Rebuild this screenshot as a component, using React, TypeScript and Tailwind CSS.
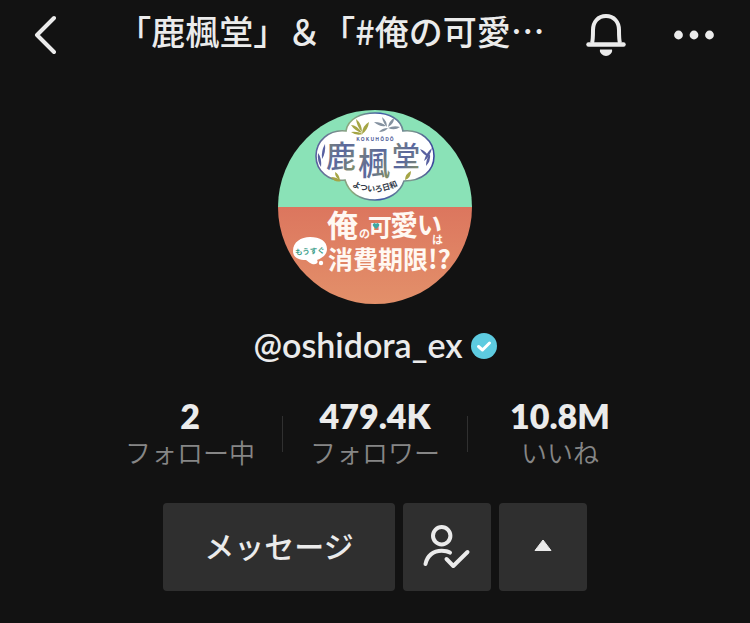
import type { ReactNode } from 'react';

const stats = [
  { value: '2', label: 'フォロー中' },
  { value: '479.4K', label: 'フォロワー' },
  { value: '10.8M', label: 'いいね' },
];

export default function App() {
  return (
    <div
      lang="ja"
      className="min-h-screen bg-[#121212] font-['Noto_Sans_CJK_JP',sans-serif] text-[#ebebeb]"
    >
      <Header />
      <main className="flex flex-col items-center px-4 pt-10 pb-8">
        <Avatar />
        <div className="mt-5 flex items-center gap-2">
          <h2 className="pb-0.5 font-['Lato','Noto_Sans_CJK_JP',sans-serif] text-[34px] leading-[42px] font-semibold">
            @oshidora_ex
          </h2>
          <VerifiedBadge />
        </div>
        <Stats />
        <div className="mt-[33px] flex gap-2">
          <ActionButton className="w-[232px]">メッセージ</ActionButton>
          <ActionButton className="w-[88px]" label="フォロー中">
            <UserCheckIcon />
          </ActionButton>
          <ActionButton className="w-[88px]" label="おすすめを表示">
            <svg width="18" height="12" viewBox="0 0 18 12" fill="currentColor">
              <path d="M9 1 L17 11.5 H1 Z" stroke="currentColor" strokeLinejoin="round" />
            </svg>
          </ActionButton>
        </div>
      </main>
    </div>
  );
}

function Header() {
  return (
    <header className="flex h-[70px] items-center pr-9 pl-8">
      <button type="button" aria-label="戻る" className="shrink-0">
        <svg width="24" height="40" viewBox="0 0 24 40" fill="none" stroke="currentColor">
          <path d="M22 3 L5 20 L22 37" strokeWidth="4" strokeLinecap="round" strokeLinejoin="round" />
        </svg>
      </button>
      <h1 className="min-w-0 flex-1 overflow-hidden pr-7 pb-2 pl-12 text-center text-[34px] leading-12 font-medium whitespace-nowrap">
        「鹿楓堂」＆「#俺の可愛…
      </h1>
      <div className="flex shrink-0 items-center gap-12">
        <button type="button" aria-label="通知">
          <svg width="40" height="42" viewBox="0 0 40 42" fill="none" stroke="currentColor">
            <path d="M6 29 C7 26 7 23 7 16 C7 8 12 2 20 2 C28 2 33 8 33 16 C33 23 33 26 34 29" strokeWidth="4" />
            <path d="M2.5 30.5 H37.5" strokeWidth="4.5" strokeLinecap="round" />
            <path d="M14 35.5 H26 C27 39 23 42 20 42 C17 42 13 39 14 35.5 Z" fill="currentColor" stroke="none" />
          </svg>
        </button>
        <button type="button" aria-label="その他">
          <svg width="40" height="10" viewBox="0 0 40 10" fill="currentColor">
            <circle cx="4.5" cy="5" r="4.4" />
            <circle cx="20" cy="5" r="4.4" />
            <circle cx="35.5" cy="5" r="4.4" />
          </svg>
        </button>
      </div>
    </header>
  );
}

function Stats() {
  return (
    <dl className="mt-[30px] flex items-center">
      {stats.map((s, i) => (
        <div key={s.label} className="flex items-center">
          {i > 0 && <div className="h-9 w-px bg-[#303030]" />}
          <div className="flex w-[184px] flex-col-reverse items-center">
            <dt className="text-[26px] leading-9 font-[350] text-[#868686]">{s.label}</dt>
            <dd className="font-['Lato','Noto_Sans_CJK_JP',sans-serif] text-[34px] leading-9 font-extrabold">
              {s.value}
            </dd>
          </div>
        </div>
      ))}
    </dl>
  );
}

function ActionButton({
  className,
  label,
  children,
}: {
  className: string;
  label?: string;
  children: ReactNode;
}) {
  return (
    <button
      type="button"
      aria-label={label}
      className={`flex h-[88px] items-center justify-center rounded bg-[#2f2f2f] pb-1 text-[30px] font-medium ${className}`}
    >
      {children}
    </button>
  );
}

function UserCheckIcon() {
  return (
    <svg
      width="48"
      height="44"
      viewBox="0 -2 48 44"
      fill="none"
      stroke="currentColor"
      strokeWidth="4"
      strokeLinecap="round"
      strokeLinejoin="round"
      overflow="visible"
    >
      <circle cx="18.7" cy="10.7" r="8.7" />
      <path d="M2.5 39 C4 31 10 25.7 18.7 25.7 C22 25.7 25 26.3 27 27.7" />
      <path d="M23.5 34 L30.3 41 L44.5 27" />
    </svg>
  );
}

function VerifiedBadge() {
  return (
    <svg width="26" height="26" viewBox="0 0 26 26" role="img" aria-label="認証済み">
      <circle cx="13" cy="13" r="13" fill="#5dcbe0" />
      <path d="M7.5 13.5 L11.5 17 L18.5 10" fill="none" stroke="#fff" strokeWidth="3" strokeLinecap="round" strokeLinejoin="round" />
    </svg>
  );
}

function Avatar() {
  return (
    <svg
      viewBox="0 0 194 194"
      className="size-[194px] rounded-full"
      fontFamily="'Noto Sans CJK JP', sans-serif"
    >
      <defs>
        <linearGradient id="coral" x1="0" y1="0" x2="0" y2="1">
          <stop offset="0" stopColor="#dc765e" />
          <stop offset="1" stopColor="#e3906a" />
        </linearGradient>
        <linearGradient id="ink" x1="0" y1="0" x2="1" y2="1">
          <stop offset="0" stopColor="#8a9068" />
          <stop offset="0.5" stopColor="#5866a0" />
          <stop offset="1" stopColor="#8d9a58" />
        </linearGradient>
        <linearGradient id="rim" x1="0" y1="0" x2="1" y2="0">
          <stop offset="0" stopColor="#5a5fa0" />
          <stop offset="0.3" stopColor="#8fae7c" />
          <stop offset="0.55" stopColor="#3f57a8" />
          <stop offset="0.8" stopColor="#7f9c8c" />
          <stop offset="1" stopColor="#3a469e" />
        </linearGradient>
        <path id="ribbon" d="M74 76 Q97 88 121 75" />
      </defs>
      <rect width="194" height="97" fill="#8ae2b7" />
      <rect y="97" width="194" height="97" fill="url(#coral)" />

      {/* Cloud crest */}
      <path
        d="M68 21 C70 8 84 3 97 3 C111 3 123 9 125 21 C143 19 156 31 156 46 C156 61 144 71 126 71 C122 83 110 90 97 90 C82 90 71 83 67 70 C51 72 38 61 38 46 C38 31 51 19 68 21 Z"
        fill="#fff"
        stroke="url(#rim)"
        strokeWidth="1.6"
      />
      {/* Bamboo leaves */}
      <g fill="#a5a545">
        <path d="M73 15 Q79 15 84 23 Q77 21 73 15 Z" />
        <path d="M78 9 Q84 14 84 22 Q79 17 78 9 Z" />
        <path d="M73 22 Q79 21 85 24 Q78 26 73 22 Z" />
        <path d="M84 24 Q84 16 91 12 Q90 20 84 24 Z" />
        <path d="M57 62 Q61 64 62 70 Q57 68 57 62 Z" />
        <path d="M53 67 Q59 67 63 71 Q57 73 53 67 Z" />
        <path d="M127 70 Q127 64 133 61 Q133 68 127 70 Z" />
      </g>
      <g fill="#8592a0">
        <path d="M96 12 Q104 12 108 16 Q101 17 96 12 Z" />
        <path d="M104 7 Q109 11 109 17 Q105 13 104 7 Z" />
        <path d="M110 17 Q111 11 116 8 Q116 14 110 17 Z" />
        <path d="M110 18 Q116 15 122 17 Q117 21 110 18 Z" />
        <path d="M101 22 Q104 18 110 18 Q107 22 101 22 Z" />
      </g>
      <g fill="#5860a0">
        <path d="M40 43 Q44 48 43 57 Q39 51 40 43 Z" />
        <path d="M47 34 Q48 43 44 49 Q43 41 47 34 Z" />
        <path d="M154 38 Q152 47 146 51 Q148 43 154 38 Z" />
        <path d="M142 39 Q148 41 151 47 Q145 45 142 39 Z" />
        <path d="M148 56 Q148 49 152 44 Q153 51 148 56 Z" />
      </g>
      <g fill="url(#ink)" fontWeight="500">
        <text x="48" y="57" fontSize="30">鹿</text>
        <text x="80" y="65" fontSize="32">楓</text>
        <text x="114" y="57" fontSize="28">堂</text>
      </g>
      <text x="97" y="31" fontSize="5" textAnchor="middle" fontWeight="700" fill="#50609a">
        K O K U H Ō D Ō
      </text>
      <text fontSize="8" fontWeight="700" fill="#333b4a">
        <textPath href="#ribbon">よついろ日和</textPath>
      </text>

      {/* Lower title */}
      <g fill="#fff8f2" fontWeight="700">
        <text x="49" y="127" fontSize="31">俺</text>
        <text x="81" y="128" fontSize="11">の</text>
        <text x="90" y="126" fontSize="24">可</text>
        <text x="112" y="126" fontSize="28">愛</text>
        <text x="139" y="124" fontSize="25">い</text>
        <text x="154" y="134" fontSize="11">は</text>
        <text x="50" y="159" fontSize="25">消費期限</text>
        <text x="150" y="159" fontSize="26">!?</text>
      </g>
      <path d="M98 119 L95 116 A1.7 1.7 0 0 1 98 114 A1.7 1.7 0 0 1 101 116 Z" fill="#3fa7a4" />
      <path
        d="M15 141 C15 132 23 127 32 127 C42 127 49 131 49 139 C49 145 44 148 39 150 C41 153 38 155 34 154 C31 153 30 151 28 150 C20 150 15 147 15 141 Z"
        fill="#fff"
      />
      <circle cx="43" cy="153" r="2.2" fill="#fff" />
      <text x="17" y="144" fontSize="7.5" fontWeight="700" fill="#3f9f8c" transform="rotate(-4 32 140)">
        もうすぐ
      </text>
    </svg>
  );
}
